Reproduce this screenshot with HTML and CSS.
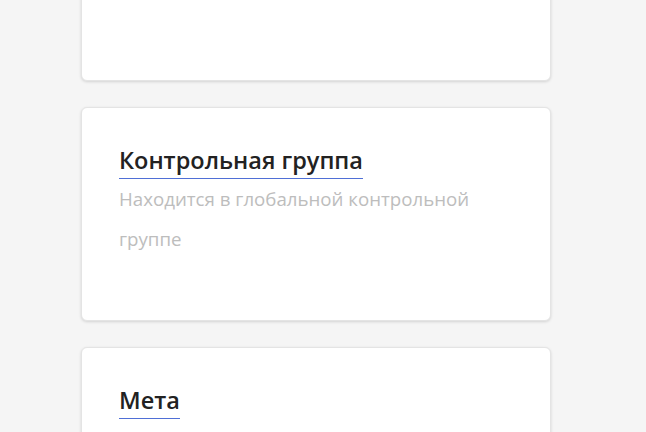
FILE: index.html
```html
<!doctype html>
<html lang="ru">
	<head>
		<meta charset="UTF-8" />
		<meta name="viewport" content="width=device-width, initial-scale=1.0" />
		<title>Сегмент</title>
		<link rel="stylesheet" href="styles.css">
	</head>
	<body>
		<div class="cards">
			<section class="card card-top"></section>

			<section class="card">
				<h2 class="card-title">Контрольная группа</h2>
				<p class="card-text">Находится в глобальной контрольной группе</p>
			</section>

			<section class="card">
				<h2 class="card-title">Мета</h2>
				<p class="card-text">&nbsp;</p>
			</section>
		</div>
	</body>
</html>
```

FILE: styles.css
```css
html, body {
	height: 100%;
	overflow: hidden;
}
body {
	margin: 0;
	background: #f5f5f5;
	font-family: 'Open Sans', 'Noto Sans', sans-serif;
	color: #222;
}
.cards {
	display: flex;
	flex-direction: column;
	gap: 26px;
	width: 470px;
	margin-left: 81px;
}
.card {
	background: #fff;
	border: 1px solid #e4e4e4;
	border-radius: 6px;
	box-shadow: 0 1px 3px rgba(0, 0, 0, 0.14);
	padding: 38px 37px 61px;
	box-sizing: border-box;
}
.card-top {
	margin-top: -40px;
	height: 121px;
}
.card-title {
	display: inline-block;
	margin: 0;
	padding-bottom: 4px;
	border-bottom: 1px solid #4f6fd6;
	font-size: 23.5px;
	line-height: 28px;
	font-weight: 600;
	color: #222;
}
.card-text {
	margin: 0;
	font-size: 18.7px;
	line-height: 40px;
	color: #bdbdbd;
	width: 360px;
}
```
